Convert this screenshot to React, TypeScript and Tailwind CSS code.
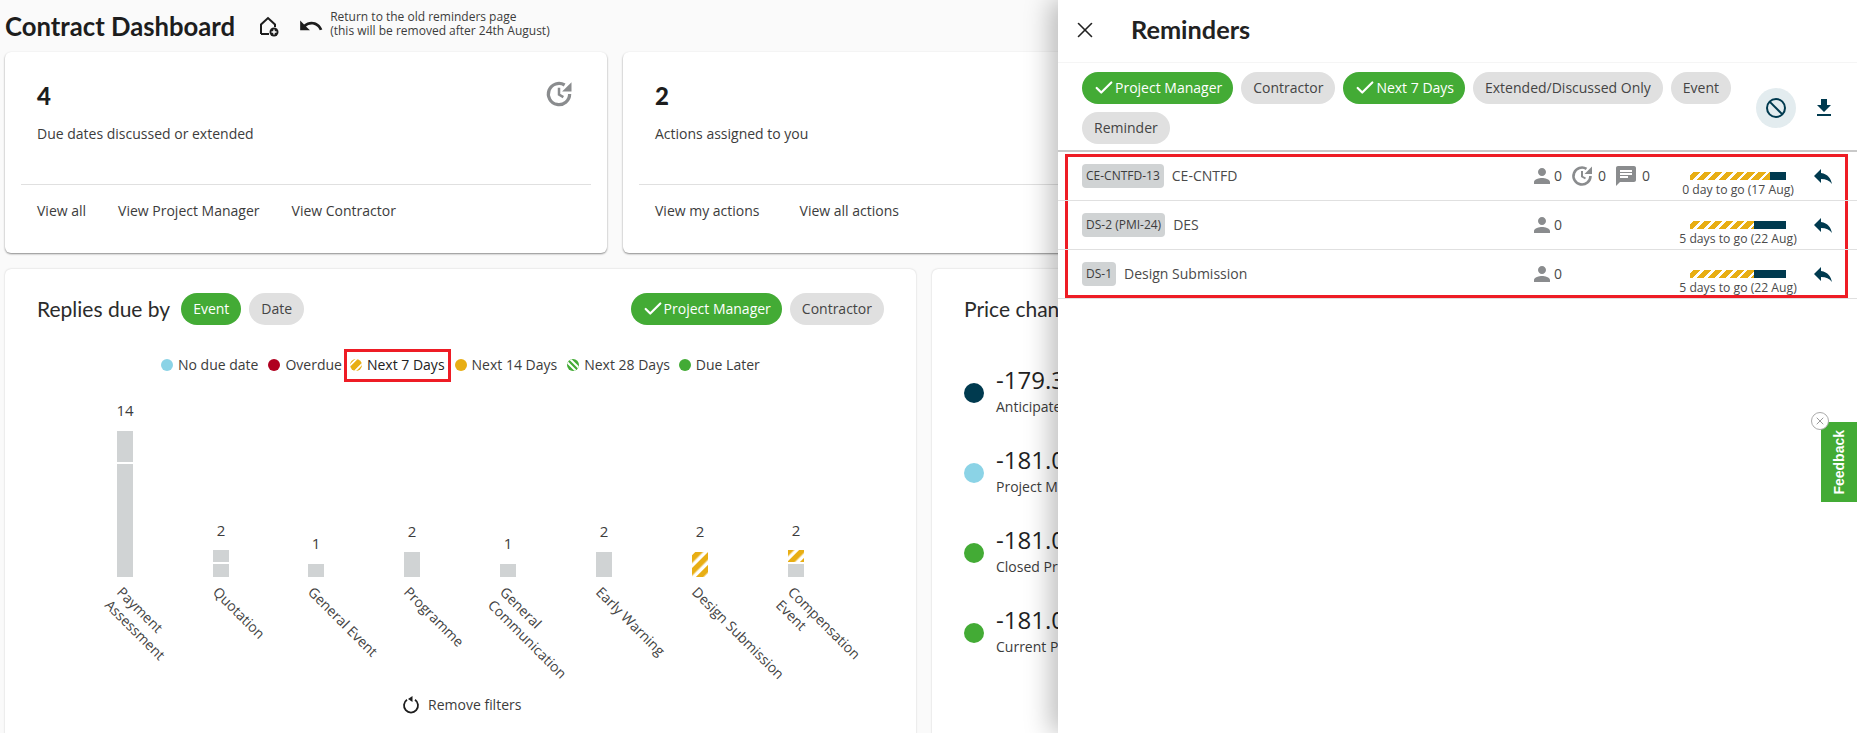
import { Check, X } from 'lucide-react';
import { MdChat, MdDownload, MdPerson, MdReply, MdUndo } from 'react-icons/md';
import type { ReactNode } from 'react';

const body = "font-['Open_Sans',sans-serif]";
const heading = "font-['Lato',sans-serif]";

function Chip({ children, active, className = '' }: { children: ReactNode; active?: boolean; className?: string }) {
    return (
        <span
            className={`flex h-8 items-center rounded-2xl text-sm ${active ? 'bg-[#43ab35] text-white' : 'bg-[#e0e0e0] text-[#444]'} ${className}`}
        >
            {children}
        </span>
    );
}

function Tick() {
    return <Check className="h-[22px] w-[22px] shrink-0" strokeWidth={2.4} />;
}

function ClockArrow({ className }: { className: string }) {
    return (
        <svg viewBox="0 0 24 24" className={className} fill="none">
            <path d="M20.5 12a8.5 8.5 0 1 1-4-7.2" stroke="#8a8c8e" strokeWidth="2.6" />
            <path d="M22 2.5v7.5h-7.5z" fill="#8a8c8e" />
            <path d="M12 7v5.5l3.5 2" stroke="#8a8c8e" strokeWidth="2" />
        </svg>
    );
}

function SummaryCard({ count, label, links, gap, className }: { count: string; label: string; links: string[]; gap: string; className: string }) {
    return (
        <div className={`relative h-[201px] shrink-0 rounded-md bg-white px-4 shadow-[0_1px_2px_rgba(0,0,0,0.45)] ${className}`}>
            <div className={`${heading} pl-4 pt-[27px] text-[24px] leading-[34px] font-black text-[#1d1d1d]`}>{count}</div>
            <div className="mt-[11px] pl-4 text-sm leading-5 text-[#3c3c3c]">{label}</div>
            <div className="mt-[40px] border-t border-[#e0e0e0]" />
            <div className={`mt-4 flex pl-4 text-sm leading-5 text-[#3c3c3c] ${gap}`}>
                {links.map((link) => (
                    <span key={link}>{link}</span>
                ))}
            </div>
        </div>
    );
}

function LegendItem({ color, label, stripe, bold }: { color?: string; label: string; stripe?: string; bold?: boolean }) {
    return (
        <span className={`flex items-center gap-[5px] ${bold ? 'font-medium text-[#222]' : 'text-[#3c3c3c]'}`}>
            {stripe ? (
                <svg viewBox="0 0 12 12" className="h-3 w-3">
                    <clipPath id={`dot-${label.replace(/ /g, '')}`}>
                        <circle cx="6" cy="6" r="6" />
                    </clipPath>
                    <g clipPath={`url(#dot-${label.replace(/ /g, '')})`}>
                        <rect width="12" height="12" fill={stripe === 'amber' ? '#e8ae14' : '#43ab35'} />
                        {stripe === 'amber' ? (
                            <path d="M-1 7.5L7.5-1M4 13L13 4" stroke="white" strokeWidth="1.8" />
                        ) : (
                            <path d="M2-1L14 11M-3 0L12 15" stroke="white" strokeWidth="2" />
                        )}
                    </g>
                </svg>
            ) : (
                <i className="h-3 w-3 rounded-full" style={{ backgroundColor: color }} />
            )}
            {label}
        </span>
    );
}

const columns = [
    { x: 117, total: '14', labelY: 411, lines: ['Payment', 'Assessment'] },
    { x: 213, total: '2', labelY: 531, lines: ['Quotation'] },
    { x: 308, total: '1', labelY: 544, lines: ['General Event'] },
    { x: 404, total: '2', labelY: 532, lines: ['Programme'] },
    { x: 500, total: '1', labelY: 544, lines: ['General', 'Communication'] },
    { x: 596, total: '2', labelY: 532, lines: ['Early Warning'] },
    { x: 692, total: '2', labelY: 532, lines: ['Design Submission'] },
    { x: 788, total: '2', labelY: 531, lines: ['Compensation', 'Event'] },
];

// bars are drawn in page coordinates minus the chart origin
function Chart() {
    const ox = 5;
    const oy = 395;
    return (
        <svg width="911" height="300" viewBox={`${ox} ${oy} 911 300`} className={`${body} mt-[13px] block`}>
            <defs>
                <pattern id="hatch" width="9" height="9" patternUnits="userSpaceOnUse" patternTransform="rotate(45)">
                    <rect width="9" height="9" fill="white" />
                    <rect width="5.5" height="9" fill="#e8ae14" />
                </pattern>
            </defs>
            <rect x="117" y="431" width="16" height="31" fill="#d0d3d4" />
            <rect x="117" y="464" width="16" height="113" fill="#d0d3d4" />
            <rect x="213" y="550" width="16" height="12" fill="#d0d3d4" />
            <rect x="213" y="564" width="16" height="13" fill="#d0d3d4" />
            <rect x="308" y="564" width="16" height="13" fill="#d0d3d4" />
            <rect x="404" y="552" width="16" height="25" fill="#d0d3d4" />
            <rect x="500" y="564" width="16" height="13" fill="#d0d3d4" />
            <rect x="596" y="552" width="16" height="25" fill="#d0d3d4" />
            <rect x="692" y="552" width="16" height="25" fill="url(#hatch)" />
            <rect x="788" y="550" width="16" height="12" fill="url(#hatch)" />
            <rect x="788" y="564" width="16" height="13" fill="#d0d3d4" />
            {columns.map((c) => (
                <g key={c.x}>
                    <text x={c.x + 8} y={c.labelY + 5} textAnchor="middle" fontSize="15" fill="#3c3c3c">
                        {c.total}
                    </text>
                    {c.lines.map((line, i) => (
                        <text
                            key={line}
                            x={c.x - 1 - i * 12}
                            y={593 + i * 13}
                            fontSize="14"
                            fill="#444"
                            transform={`rotate(45 ${c.x - 1 - i * 12} ${593 + i * 13})`}
                        >
                            {line}
                        </text>
                    ))}
                </g>
            ))}
        </svg>
    );
}

function PriceRow({ color, value, label }: { color: string; value: string; label: string }) {
    return (
        <div className="flex h-20 items-start">
            <i className="mt-[17px] h-5 w-5 shrink-0 rounded-full" style={{ backgroundColor: color }} />
            <div className="ml-[12px] whitespace-nowrap">
                <div className="text-2xl leading-[28px] text-[#222]">{value}</div>
                <div className="mt-[3px] text-sm leading-5 text-[#3c3c3c]">{label}</div>
            </div>
        </div>
    );
}

function StripeBar({ stripes }: { stripes: string }) {
    return (
        <div className="flex h-2 w-24">
            <div
                className={`h-full ${stripes} bg-[repeating-linear-gradient(135deg,#fff_0,#fff_2.5px,#e8ae14_2.5px,#e8ae14_7.7px)]`}
            />
            <div className="h-full flex-1 bg-[#003a4f]" />
        </div>
    );
}

function ReminderRow({ tag, title, due, stripes, extra }: { tag: string; title: string; due: string; stripes: string; extra?: boolean }) {
    return (
        <div className="flex h-[49px] items-center border-b border-[#e0e0e0] pr-[22px] pl-[24px] text-[#4a4a4a]">
            <span className="flex h-6 items-center rounded bg-[#d0d3d4] px-[4px] text-xs text-[#3c3c3c]">{tag}</span>
            <span className="ml-2 text-sm">{title}</span>
            <div className="ml-auto flex w-[149px] items-center text-sm">
                <MdPerson className="h-6 w-6 text-[#8a8c8e]" />
                <span className="w-2">0</span>
                {extra && (
                    <>
                        <ClockArrow className="ml-2 h-6 w-6" />
                        <span className="ml-1 w-2">0</span>
                        <MdChat className="ml-2 h-6 w-6 text-[#8a8c8e]" />
                        <span className="ml-1 w-2">0</span>
                    </>
                )}
            </div>
            <div className="flex w-[118px] flex-col items-center pt-[18px]">
                <StripeBar stripes={stripes} />
                <span className="mt-[2px] text-[12.2px] leading-4 whitespace-nowrap">{due}</span>
            </div>
            <MdReply className="ml-[14px] h-6 w-6 text-[#003a4f]" />
        </div>
    );
}

export default function App() {
    return (
        <div className={`${body} relative h-[733px] w-[1857px] overflow-hidden bg-[#fafafa]`}>
            <div className="flex h-[52px] items-center pl-[5px]">
                <h1 className={`${heading} text-[25.7px] font-bold text-[#1d1d1d]`}>Contract Dashboard</h1>
                <svg viewBox="0 0 24 24" className="ml-[21px] h-6 w-6" fill="none" stroke="#1d1d1d" strokeWidth="2">
                    <path d="M5 20V10.5L12 4l7 6.5V13M5 20h8" />
                    <circle cx="18" cy="18" r="4.5" fill="#1d1d1d" stroke="none" />
                    <path d="M18 15.5v5M15.5 18h5" stroke="white" strokeWidth="1.4" />
                </svg>
                <MdUndo className="ml-[18px] h-[26px] w-[26px] text-[#1d1d1d]" />
                <p className="-mt-1 ml-[6px] text-xs leading-[14px] text-[#3c3c3c]">
                    Return to the old reminders page
                    <br />
                    (this will be removed after 24th August)
                </p>
            </div>

            <div className="flex gap-4 pl-[5px]">
                <SummaryCard
                    className="w-[602px]"
                    count="4"
                    label="Due dates discussed or extended"
                    links={['View all', 'View Project Manager', 'View Contractor']}
                    gap="gap-8"
                />
                <SummaryCard
                    className="w-[602px]"
                    count="2"
                    label="Actions assigned to you"
                    links={['View my actions', 'View all actions']}
                    gap="gap-[40px]"
                />
            </div>
            <ClockArrow className="absolute top-[79px] left-[544px] h-[30px] w-[30px]" />

            <div className="mt-4 flex gap-4 pl-[5px]">
                <section className="relative h-[480px] w-[911px] shrink-0 rounded-md bg-white shadow-[0_0_2px_rgba(0,0,0,0.2)]">
                    <div className="flex items-center pt-6 pr-8 pl-[32px]">
                        <h2 className={`${heading} text-[21px] text-[#2b2b2b]`}>Replies due by</h2>
                        <Chip active className="ml-[11px] px-3">Event</Chip>
                        <Chip className="ml-2 px-3">Date</Chip>
                        <Chip active className="ml-auto px-[11px]"><Tick />Project Manager</Chip>
                        <Chip className="ml-2 px-3">Contractor</Chip>
                    </div>
                    <div className="mt-[23px] flex h-[34px] items-center pl-[156px] text-sm">
                        <LegendItem color="#8bd3e6" label="No due date" />
                        <span className="ml-[10px]"><LegendItem color="#b00020" label="Overdue" /></span>
                        <span className="ml-[2px] flex h-[33px] items-center border-[3px] border-[#ee1c25] px-[3px]">
                            <LegendItem stripe="amber" label="Next 7 Days" bold />
                        </span>
                        <span className="ml-[4px]"><LegendItem color="#e8ae14" label="Next 14 Days" /></span>
                        <span className="ml-[10px]"><LegendItem stripe="green" label="Next 28 Days" /></span>
                        <span className="ml-[9px]"><LegendItem color="#43ab35" label="Due Later" /></span>
                    </div>
                    <Chart />
                    <div className="absolute top-[426px] left-[396px] flex items-center gap-[7px] text-sm text-[#3c3c3c]">
                        <svg viewBox="0 0 20 20" className="h-5 w-5" fill="none" stroke="#1d1d1d" strokeWidth="1.8">
                            <path d="M6 4.8a7 7 0 1 0 8 0" />
                            <path d="M11.5 1v6L7 4z" fill="#1d1d1d" stroke="none" />
                        </svg>
                        Remove filters
                    </div>
                </section>

                <section className="h-[480px] w-[400px] shrink-0 rounded-md bg-white pt-6 pl-[32px] shadow-[0_0_2px_rgba(0,0,0,0.2)]">
                    <h2 className={`${heading} h-[60px] text-[21px] text-[#2b2b2b]`}>Price changes</h2>
                    <div className="mt-[13px]">
                        <PriceRow color="#003a4f" value="-179.30" label="Anticipated Prices" />
                        <PriceRow color="#8bd3e6" value="-181.05" label="Project Manager" />
                        <PriceRow color="#43ab35" value="-181.05" label="Closed Prices" />
                        <PriceRow color="#43ab35" value="-181.05" label="Current Prices" />
                    </div>
                </section>
            </div>

            {/* reminders drawer */}
            <aside className="absolute top-0 right-0 h-[733px] w-[799px] bg-white shadow-[-8px_0_24px_rgba(0,0,0,0.25)]">
                <header className="flex h-[63px] items-center border-b border-[#f5f5f5] pb-[2px] pl-[14px]">
                    <X className="h-[26px] w-[26px] text-[#222]" strokeWidth={1.5} />
                    <h2 className={`${heading} ml-[33px] text-[25.3px] font-bold text-[#222]`}>Reminders</h2>
                </header>
                <div className="flex h-[89px] border-b-2 border-[#c9c9c9]">
                    <div className="flex w-[680px] flex-wrap content-start gap-2 pt-[9px] pl-[24px]">
                        <Chip active className="px-[11px]"><Tick />Project Manager</Chip>
                        <Chip className="px-3">Contractor</Chip>
                        <Chip active className="px-[11px]"><Tick />Next 7 Days</Chip>
                        <Chip className="px-3">Extended/Discussed Only</Chip>
                        <Chip className="px-3">Event</Chip>
                        <Chip className="px-3">Reminder</Chip>
                    </div>
                    <div className="ml-[18px] flex items-center pt-[2px]">
                        <span className="flex h-10 w-10 items-center justify-center rounded-full bg-[#e3ecef]">
                            <svg viewBox="0 0 24 24" className="h-[24px] w-[24px]" fill="none" stroke="#003a4f" strokeWidth="2">
                                <circle cx="12" cy="12" r="9" />
                                <path d="M5.6 5.6l12.8 12.8" />
                            </svg>
                        </span>
                        <MdDownload className="ml-[16px] h-6 w-6 text-[#003a4f]" />
                    </div>
                </div>
                <div className="mt-[2px] mr-[9px] ml-[7px] h-[144px] border-[3px] border-[#ee1c25]" />
                <div className="absolute top-[152px] right-0 left-0">
                    <ReminderRow tag="CE-CNTFD-13" title="CE-CNTFD" due="0 day to go (17 Aug)" stripes="w-[80px]" extra />
                    <ReminderRow tag="DS-2 (PMI-24)" title="DES" due="5 days to go (22 Aug)" stripes="w-[64px]" />
                    <ReminderRow tag="DS-1" title="Design Submission" due="5 days to go (22 Aug)" stripes="w-[64px]" />
                </div>
            </aside>

            {/* feedback tab */}
            <div className="absolute top-[422px] right-0 flex h-[80px] w-[36px] items-center justify-center bg-[#43ab35]">
                <span className="rotate-180 font-['Liberation_Sans',sans-serif] text-sm font-bold whitespace-nowrap text-white [writing-mode:vertical-rl]">
                    Feedback
                </span>
            </div>
            <span className="absolute top-[412px] left-[1811px] flex h-[18px] w-[18px] items-center justify-center rounded-full border border-[#aaa] bg-white text-[#999]">
                <X className="h-3 w-3" strokeWidth={2} />
            </span>
        </div>
    );
}
